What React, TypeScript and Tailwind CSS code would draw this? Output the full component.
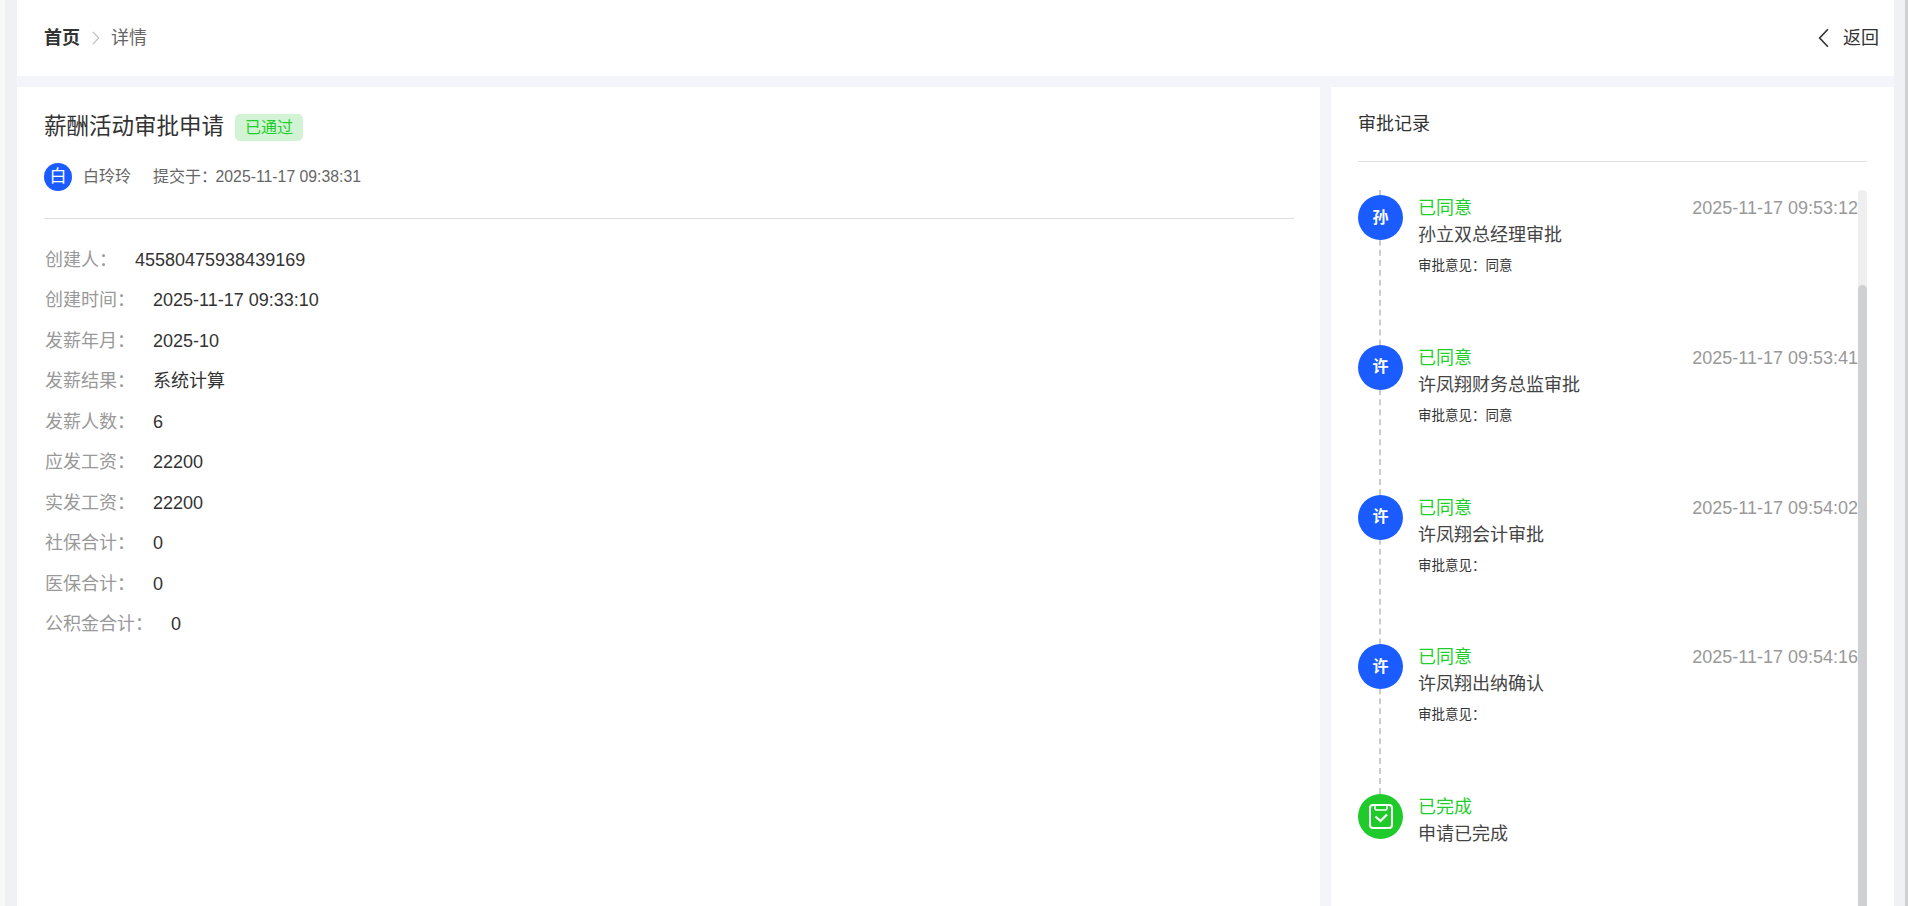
import React from "react";

const fontStack = "font-['Liberation_Sans','Noto_Sans_CJK_SC',sans-serif]";

const fields = [
  { label: "创建人", value: "45580475938439169" },
  { label: "创建时间", value: "2025-11-17 09:33:10" },
  { label: "发薪年月", value: "2025-10" },
  { label: "发薪结果", value: "系统计算" },
  { label: "发薪人数", value: "6" },
  { label: "应发工资", value: "22200" },
  { label: "实发工资", value: "22200" },
  { label: "社保合计", value: "0" },
  { label: "医保合计", value: "0" },
  { label: "公积金合计", value: "0" },
];

const records = [
  { initial: "孙", status: "已同意", time: "2025-11-17 09:53:12", title: "孙立双总经理审批", opinion: "审批意见：同意" },
  { initial: "许", status: "已同意", time: "2025-11-17 09:53:41", title: "许凤翔财务总监审批", opinion: "审批意见：同意" },
  { initial: "许", status: "已同意", time: "2025-11-17 09:54:02", title: "许凤翔会计审批", opinion: "审批意见：" },
  { initial: "许", status: "已同意", time: "2025-11-17 09:54:16", title: "许凤翔出纳确认", opinion: "审批意见：" },
];

const Chevron = ({ dir, className }: { dir: "left" | "right"; className: string }) => (
  <svg viewBox="0 0 10 18" fill="none" stroke="currentColor" strokeWidth="1.5" className={className}>
    <path d={dir === "left" ? "M9 1 1.500 9 9 17" : "M1 1l7.500 8L1 17"} />
  </svg>
);

const DoneIcon = () => (
  <svg viewBox="0 0 24 25" fill="none" stroke="white" strokeWidth="2" className="w-[24px] h-[25px]">
    <rect x="1" y="1" width="22" height="23" rx="3" />
    <path d="M6 1v3.500a1.500 1.500 0 0 0 1.500 1.500h9A1.500 1.500 0 0 0 18 4.500V1" strokeWidth="1.600" />
    <path d="M6.500 12.500l5 4.500 6.500-6.500" strokeWidth="2.200" />
  </svg>
);

const RecordItem = ({ record }: { record: (typeof records)[number] }) => (
  <div className="relative flex h-[149.75px] gap-[15px]">
    <div className="w-[45px] h-[45px] shrink-0 rounded-full bg-[#1a5cff] text-white text-[16px] font-bold flex items-center justify-center">
      {record.initial}
    </div>
    <div className="flex-1">
      <div className="flex justify-between leading-[27px] text-[18px]">
        <span className="text-[#1ecf2b]">{record.status}</span>
        <span className="text-[#999999] mr-[9px]">{record.time}</span>
      </div>
      <div className="text-[18px] leading-[27px] text-[#444444]">{record.title}</div>
      <div className="mt-[7px] text-[13.5px] leading-[20px] text-[#333333]">{record.opinion}</div>
    </div>
  </div>
);

export default function App() {
  return (
    <div className={`${fontStack} flex h-[906px] w-full overflow-hidden bg-[#f0f1f4]`}>
      <div className="w-[5px] shrink-0 bg-[#f8f8f8]" />

      <div className="flex-1 min-w-0 pl-[12px] pr-[11px]">
        <div className="h-full flex flex-col gap-[11px] bg-[#f3f5fb]">
          {/* Breadcrumb bar */}
          <header className="h-[76px] shrink-0 bg-white flex items-center justify-between pl-[27px] pr-[15px] text-[18px]">
            <div className="flex items-center">
              <span className="font-bold text-[#333333]">首页</span>
              <Chevron dir="right" className="w-[8px] h-[14px] ml-[12px] mr-[11px] text-[#bbbbbb]" />
              <span className="text-[#666666]">详情</span>
            </div>
            <div className="flex items-center text-[#333333]">
              <Chevron dir="left" className="w-[11px] h-[20px] mr-[14px]" />
              <span>返回</span>
            </div>
          </header>

          <div className="flex-1 min-h-0 flex gap-[11px]">
            {/* Detail card */}
            <section className="w-[1303px] shrink-0 bg-white pl-[27px] pr-[26px] pt-[27px]">
              <div className="flex items-center h-[27px]">
                <h1 className="text-[22.5px] font-normal text-[#333333] -mt-[1px]">薪酬活动审批申请</h1>
                <span className="ml-[11px] h-[27px] w-[68px] rounded-[5px] bg-[#d2f4d4] text-[#1ecf2b] text-[16px] flex items-center justify-center">
                  已通过
                </span>
              </div>
              <div className="flex items-center h-[28px] mt-[22px] text-[16px] text-[#666666]">
                <span className="w-[28px] h-[28px] rounded-full bg-[#1a5cff] text-white text-[17px] flex items-center justify-center">白</span>
                <span className="ml-[11px]">白玲玲</span>
                <span className="ml-[22px]">提交于：</span>
                <span className="-ml-[1.5px] text-[15.8px]">2025-11-17 09:38:31</span>
              </div>
              <div className="h-px bg-[#dcdde3] mt-[27px]" />
              <div className="mt-[27.5px] pl-px">
                {fields.map((field) => (
                  <div key={field.label} className="flex text-[18px] leading-[27px] mb-[13.55px]">
                    <span className="text-[#999999] mr-[18px]">{field.label}：</span>
                    <span className="text-[#333333]">{field.value}</span>
                  </div>
                ))}
              </div>
            </section>

            {/* Approval records */}
            <aside className="flex-1 min-w-0 bg-white pl-[27px] pr-[27px] flex flex-col">
              <div className="h-[75px] shrink-0 border-b border-[#e1e2e6] pt-[23.5px] text-[18px] leading-[27px] text-[#333333]">
                审批记录
              </div>
              <div className="relative flex-1 min-h-0 mt-[28px] overflow-hidden">
                <div className="absolute left-[21px] top-0 h-[604px] border-l-2 border-dashed border-[#cccccc]" />
                <div className="relative pt-[5px]">
                  {records.map((record, i) => (
                    <RecordItem key={i} record={record} />
                  ))}
                  <div className="flex gap-[15px]">
                    <div className="w-[45px] h-[45px] shrink-0 rounded-full bg-[#1ecb2a] flex items-center justify-center">
                      <DoneIcon />
                    </div>
                    <div className="-mt-[0.5px]">
                      <div className="text-[18px] leading-[27px] text-[#1ecf2b]">已完成</div>
                      <div className="text-[18px] leading-[27px] text-[#444444]">申请已完成</div>
                    </div>
                  </div>
                </div>
                {/* Scrollbar of the list */}
                <div className="absolute right-0 top-0 bottom-0 w-[9px] rounded-t-full bg-[#efefef]">
                  <div className="absolute left-0 right-0 top-[95px] bottom-0 rounded-t-full bg-[#cfd0d2]" />
                </div>
              </div>
            </aside>
          </div>
        </div>
      </div>

      {/* Page scrollbar */}
      <div className="w-[3px] shrink-0 bg-[#cfd0d2]" />
    </div>
  );
}
